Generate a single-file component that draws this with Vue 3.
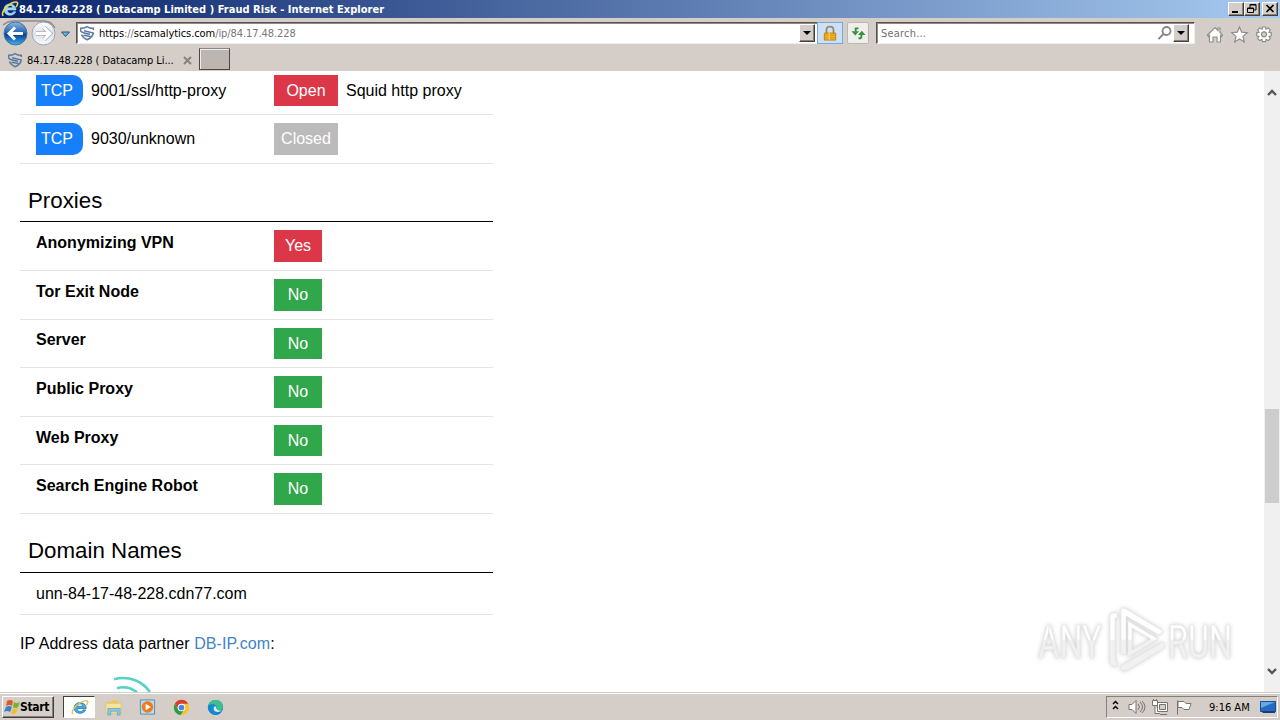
<template>
  <div class="screen">
    <header class="titlebar">
      <svg class="title-ie" viewBox="0 0 18 18">
        <path d="M15 10H6.200c.3 4.200 5.200 4.100 6.200 1.700h2.400C12.600 17 3 16.400 3.100 9.200 3.300 2 14.900 2.300 15 10ZM6.400 7.800h5.400c-.5-3.200-4.800-3.200-5.400 0Z" fill="#8ed4f8" stroke="#d3f1ff" stroke-width=".5" />
        <path d="M2 16C-.5 11 9 2 15 2c3 0 1 4 0 5" fill="none" stroke="#f0d549" stroke-width="1.600" />
      </svg>
      <span class="title-text">84.17.48.228 ( Datacamp Limited ) Fraud Risk - Internet Explorer</span>
      <div class="window-buttons">
        <button class="win-btn"><svg viewBox="0 0 14 12"><path d="M3 9h6" stroke="#000" stroke-width="2" /></svg></button>
        <button class="win-btn"><svg viewBox="0 0 14 12"><path d="M5 5V1.500h6V7H9M5 2h6M2.500 5h6v4.500h-6zM2 5.500h7" fill="none" stroke="#000" /></svg></button>
        <button class="win-btn close"><svg viewBox="0 0 14 12"><path d="m3.500 2 7 7m0-7-7 7" stroke="#000" stroke-width="1.700" /></svg></button>
      </div>
    </header>

    <nav class="toolbar">
      <svg class="nav-arrows" viewBox="0 0 74 28">
        <defs>
          <linearGradient id="back" x2="0" y2="1">
            <stop stop-color="#8bb9e7" /><stop offset=".45" stop-color="#2864b3" /><stop offset=".55" stop-color="#0b3f93" /><stop offset="1" stop-color="#3bb5ee" />
          </linearGradient>
          <linearGradient id="forward" x2="0" y2="1">
            <stop stop-color="#fff" /><stop offset=".5" stop-color="#dce1e8" /><stop offset="1" stop-color="#f6fbff" />
          </linearGradient>
        </defs>
        <path d="M3 6Q8 1.500 16 2H43Q51 1.500 55 9" fill="none" stroke="#918d89" stroke-width="1.500" />
        <circle cx="15.500" cy="14.500" r="11.500" fill="url(#back)" stroke="#526f9a" />
        <path d="M23 14.500H9m6-6-6 6 6 6" fill="none" stroke="#fff" stroke-width="3" />
        <circle cx="43.500" cy="14.500" r="11.500" fill="url(#forward)" stroke="#9ca3aa" />
        <path d="M36 14.500h14m-6-6 6 6-6 6" fill="none" stroke="#aaafb6" stroke-width="4.500" />
        <path d="M36 14.500h14m-6-6 6 6-6 6" fill="none" stroke="#fff" stroke-width="3" />
        <path d="M61.500 13h8l-4 4.500z" fill="#65b2dd" stroke="#24587f" />
      </svg>
      <div class="address">
        <svg class="shield" viewBox="0 0 16 16"><path :d="shield" /></svg>
        <span class="url"><b>https</b>://<b>scamalytics.com</b>/ip/84.17.48.228</span>
        <button class="drop"><i></i></button>
      </div>
      <div class="lock">
        <svg viewBox="0 0 16 18">
          <path d="M4 9V5c0-5 8-5 8 0v4" fill="none" stroke="#9b8860" stroke-width="2" />
          <path d="M1.500 8.500h13v8h-13z" fill="#f4b324" stroke="#b7790b" />
          <path d="M2 11h12M2 14h12" stroke="#d99112" /><path d="M7 8v8" stroke="#ffe27b" />
        </svg>
      </div>
      <div class="refresh">
        <svg viewBox="0 0 18 16">
          <path d="M9 2.500H6V6M12 13V9m0 4H9" fill="none" stroke="#349241" stroke-width="2" />
          <path d="M1.500 5.500h8l-4 4.500zM8.500 9.500h8l-4-4.500z" fill="#349241" />
        </svg>
      </div>
      <div class="search">
        <span>Search...</span>
        <svg viewBox="0 0 14 14"><circle cx="8.500" cy="5" r="4" /><path d="m5.500 8-5 5" /></svg>
        <button class="drop"><i></i></button>
      </div>
      <svg class="tools" viewBox="0 0 68 20">
        <g fill="#fff" stroke="#918d8b" stroke-width="1.200">
          <path d="m1.500 10 7.500-7.500 3 3V3h2v4.500l2.500 2.500-1 1.500-1-1V17H11v-5H7v5H3.500v-6.500l-1 1z" />
          <path d="m33.500 2 2.200 5.200 5.600.5-4.300 3.700 1.300 5.600-4.800-3-4.800 3 1.300-5.600-4.300-3.700 5.600-.5z" />
          <path d="m56.500 2h3l.5 2.200 2.300-1.200 2 2-1.200 2.300 2.200.5v3l-2.200.5 1.200 2.300-2 2-2.300-1.200-.5 2.200h-3l-.5-2.200-2.300 1.200-2-2 1.200-2.300-2.200-.5v-3l2.200-.5-1.200-2.300 2-2L56 4.200z" />
          <circle cx="58" cy="9.300" r="2.500" fill="#d5cec8" />
        </g>
      </svg>
    </nav>

    <div class="tabs">
      <div class="tab">
        <svg class="shield" viewBox="0 0 16 16"><path :d="shield" /></svg>
        <span>84.17.48.228 ( Datacamp Li...</span>
        <svg class="tab-close" viewBox="0 0 9 9"><path d="m1 1 7 7m0-7-7 7" /></svg>
      </div>
      <div class="new-tab"></div>
    </div>

    <main class="viewport">
      <div class="page">
        <div v-for="port in ports" :key="port.name" class="row">
          <div class="cell-name">
            <span class="protocol">TCP</span>
            <span>{{ port.name }}</span>
          </div>
          <span class="badge wide" :class="port.state.toLowerCase()">{{ port.state }}</span>
          <span class="detail">{{ port.detail }}</span>
        </div>

        <h2>Proxies</h2>
        <div v-for="proxy in proxies" :key="proxy.name" class="row">
          <strong class="cell-name">{{ proxy.name }}</strong>
          <span class="badge" :class="proxy.value.toLowerCase()">{{ proxy.value }}</span>
        </div>

        <h2 class="domains">Domain Names</h2>
        <div class="row domain">unn-84-17-48-228.cdn77.com</div>

        <p class="partner">IP Address data partner <a>DB-IP.com</a>:</p>
        <svg class="partner-logo" viewBox="0 0 50 16">
          <path d="M4 3.200C19-.5 32 5 40 16M7 12.200c7-2 14-.5 20 4" fill="none" stroke="#54d2c8" stroke-width="2.600" />
        </svg>
      </div>
      <div class="scrollbar">
        <svg viewBox="0 0 10 7"><path d="m1 6 4-4 4 4" /></svg>
        <div class="thumb"></div>
        <svg class="down" viewBox="0 0 10 7"><path d="m1 1 4 4 4-4" /></svg>
      </div>
      <svg class="watermark" viewBox="0 0 210 76">
        <defs>
          <linearGradient id="mark-fill" gradientUnits="userSpaceOnUse" x1="0" y1="0" x2="0" y2="76">
            <stop offset=".5" stop-color="#fff" /><stop offset=".52" stop-color="#f1f1f1" />
          </linearGradient>
        </defs>
        <g class="mark" fill="url(#mark-fill)">
          <g transform="scale(.69 1)">
            <text x="12" y="57">ANY</text>
            <text x="200" y="57">RUN</text>
          </g>
          <path fill-rule="evenodd" d="M87 12h-3q-4 0-4 4v44q0 4 4 5l3 1v-5l-2-1V17h2zM91 8v45h5V15l33 19 4-4L96 8q-4-2-5 0zM98 20v36l30-18zM102 27v22l19-11zM133 41 91 65l1 5 5-1 35-21q4-3 1-7z" />
        </g>
      </svg>
    </main>

    <footer class="taskbar">
      <button class="start">
        <svg viewBox="0 0 16 16">
          <path d="M3 2q3-2 6 0L8 7Q5 5 2 7z" fill="#e45825" /><path d="M10 3q3 2 6 0l-2 5q-3 2-5 0z" fill="#72b62d" />
          <path d="M2 8q3-2 6 0l-2 5q-3-2-6 0z" fill="#3580d2" /><path d="M9 9q2 2 5 0l-2 5q-3 2-5 0z" fill="#f4bd28" />
        </svg>
        <span>Start</span>
      </button>
      <div class="task active">
        <svg viewBox="0 0 20 20">
          <path d="M17 11H7.500c.2 4 5 4 6.200 1.500h2.800C14 18 4 17 4.300 10.300 4.500 3 17 2.800 17 11ZM7.700 8.700h6c-.5-3.500-5.500-3.500-6 0Z" fill="#46aee5" stroke="#257fb9" stroke-width=".9" />
          <path d="M3 17C0 13 9 4 16 3c4-.5 3 2 1 5" fill="none" stroke="#e9c44a" stroke-width="1.500" />
        </svg>
      </div>
      <div class="task">
        <svg viewBox="0 0 20 20">
          <path d="M3 4h5l1-2h6v14H3z" fill="#e9c969" /><path d="M2 5.500h16V16H2z" fill="#f7e49a" stroke="#d6b95f" stroke-width=".6" />
          <path d="M4 18v-7h13v7h-3v-4H7v4z" fill="#83c8e6" stroke="#5099bb" stroke-width=".6" />
        </svg>
      </div>
      <div class="task">
        <svg viewBox="0 0 20 20">
          <path d="M2.500 2h15v15h-15z" fill="#bad9ed" stroke="#568cb0" /><circle cx="10" cy="9.500" r="6" fill="#ef791c" /><path d="m8 6 5.500 3.500L8 13z" fill="#fff" />
        </svg>
      </div>
      <div class="task">
        <svg viewBox="0 0 20 20">
          <circle cx="10" cy="10" r="8" fill="#f5c528" /><path d="M3 6a8 8 0 0 1 14 0h-7a4 4 0 0 0-3.500 6z" fill="#db3c30" />
          <path d="M3 6a8 8 0 0 0 6 12l3.500-5.500a4 4 0 0 1-6-.5z" fill="#2c9c4c" /><circle cx="10" cy="10" r="4" fill="#fff" /><circle cx="10" cy="10" r="3" fill="#4285f4" />
        </svg>
      </div>
      <div class="task">
        <svg viewBox="0 0 20 20">
          <circle cx="10" cy="10" r="8" fill="#1475bd" /><path d="M2 9C3-.5 18 0 18 9c0 4-4 5-7 3 1-2 1-5-3-5-3 0-5 1-6 2z" fill="#3dbf91" />
          <path d="M2 9c2-4 9-3 9 1-3 0-3 6 5 5-5 5-14 2-14-6z" fill="#1388d4" /><path d="M11 9c-1 3 2 5 6 4-3 3-9 2-9-2 0-2 2-3 3-2z" fill="#d4eff7" />
        </svg>
      </div>
      <div class="tray">
        <svg class="tray-icons" viewBox="0 0 86 18">
          <path d="m2 6 2.500-2.500L7 6M2 11l2.500-2.500L7 11" fill="none" stroke="#000" stroke-width="1.500" />
          <g fill="#fff" stroke="#77736f">
            <path d="M18 6.500h3l4-4v13l-4-4h-3z" /><path d="M27 6q3 3 0 6m2-8q5 5 0 10m2-11q6 6 0 12" fill="none" />
            <path d="M46.500 4.500h10v9h-10zM49 16.500h7M41.500 2.500h5v5h-5zM42.500 1v2m3-2v2M44 7.500v8h5" /><path d="M48.500 6.500h6v5h-6z" fill="#d4d0c8" />
            <path d="M66.500 2.500v14M67 3.500h6l2 2h5l-2 6h-5l-2-2h-4z" />
          </g>
        </svg>
        <time>9:16 AM</time>
        <svg class="desktop" viewBox="0 0 16 14"><path d="M.5 1.500h15v10H.5z" fill="#266bc2" stroke="#184e94" /><path d="M1 2h14L1 8z" fill="#65a9e8" /><path d="M1 11h14v2H3z" fill="#183f78" /></svg>
      </div>
    </footer>
  </div>
</template>

<script setup>
// shared by the address bar and the tab
const shield = 'M14.300 5V3.300Q11 3.500 8 1.600 5 3.500 1.700 3.300V6Q2 7.500 11 9.300M5 5.800 14.300 8Q13.500 12.500 8 14.700 4 13 2.300 9.700M4.500 10.300 11.500 11.500'

const ports = [
  { name: '9001/ssl/http-proxy', state: 'Open', detail: 'Squid http proxy' },
  { name: '9030/unknown', state: 'Closed', detail: '' },
]

const proxies = [
  { name: 'Anonymizing VPN', value: 'Yes' },
  { name: 'Tor Exit Node', value: 'No' },
  { name: 'Server', value: 'No' },
  { name: 'Public Proxy', value: 'No' },
  { name: 'Web Proxy', value: 'No' },
  { name: 'Search Engine Robot', value: 'No' },
]
</script>

<style>
body {
  overflow: hidden;
}
</style>

<style scoped>
* {
  box-sizing: border-box;
}
.screen {
  display: flex;
  flex-direction: column;
  width: 1280px;
  height: 720px;
  overflow: hidden;
  background: #d5cec8;
  font: 11px "DejaVu Sans Condensed", "DejaVu Sans", sans-serif;
  color: #000;
}
svg {
  display: block;
  flex: none;
}
button {
  padding: 0;
  border: 1px solid;
  border-color: #fff #404040 #404040 #fff;
  background: #d5cec8;
  box-shadow: inset -1px -1px #858078;
  font: inherit;
}
.titlebar {
  display: flex;
  align-items: center;
  flex: none;
  height: 18px;
  padding: 0 2px 0 1px;
  background: linear-gradient(90deg, #0a246a, #a6caf0);
}
.title-ie {
  width: 18px;
  height: 18px;
}
.title-text {
  color: #fff;
  font-weight: bold;
  white-space: nowrap;
  letter-spacing: 0.03px;
}
.window-buttons {
  display: flex;
  margin-left: auto;
}
.win-btn {
  width: 16px;
  height: 14px;
}
.win-btn svg {
  width: 14px;
  height: 12px;
}
.win-btn.close {
  margin-left: 2px;
}
.toolbar {
  display: flex;
  flex: none;
  height: 30px;
  padding-top: 1px;
}
.nav-arrows {
  width: 74px;
  height: 28px;
}
.address,
.search {
  display: flex;
  align-items: center;
  height: 22px;
  margin-top: 3px;
  border: 1px solid;
  border-color: #57514d #eee #eee #57514d;
  box-shadow: inset 1px 1px #918a85;
  background: #fff;
}
.address {
  width: 742px;
  margin-left: 2px;
  padding: 1px 2px;
}
.shield {
  width: 16px;
  height: 16px;
  fill: none;
  stroke: #5b7ba2;
  stroke-width: 1.5;
}
.url {
  margin-left: 4px;
  color: #777;
  letter-spacing: -0.08px;
}
.url b {
  font-weight: normal;
  color: #000;
}
.drop {
  width: 16px;
  height: 18px;
  margin-left: auto;
}
.drop i {
  display: block;
  width: 0;
  margin: auto;
  border: 4px solid transparent;
  border-top-color: #000;
  border-bottom: 0;
}
.lock,
.refresh {
  display: flex;
  align-items: center;
  justify-content: center;
  height: 22px;
  margin-top: 3px;
}
.lock {
  width: 26px;
  margin-left: -1px;
  border: 1px solid #78a8dc;
  background: #cce1f8;
}
.lock svg {
  width: 14px;
  height: 17px;
}
.refresh {
  width: 22px;
  margin-left: 4px;
  border: 1px solid #bbb8b4;
  border-radius: 2px;
  background: #f0eeeb;
}
.refresh svg {
  width: 17px;
  height: 15px;
}
.search {
  width: 319px;
  margin-left: 7px;
  padding: 0 5px 0 4px;
  color: #707070;
}
.search span {
  letter-spacing: 0.2px;
}
.search svg {
  width: 14px;
  height: 14px;
  margin-left: auto;
  fill: none;
  stroke: #858585;
  stroke-width: 1.8;
}
.search .drop {
  margin-left: 1px;
}
.tools {
  width: 68px;
  height: 20px;
  margin: 6px 0 0 11px;
}
.tabs {
  display: flex;
  flex: none;
  height: 23px;
}
.tab {
  display: flex;
  align-items: center;
  width: 199px;
  padding-left: 7px;
}
.tab span {
  margin-left: 4px;
  padding-top: 1px;
  white-space: nowrap;
  letter-spacing: -0.05px;
}
.tab-close {
  width: 9px;
  height: 9px;
  margin: 1px 7px 0 auto;
  stroke: #85807c;
  stroke-width: 2;
}
.new-tab {
  width: 31px;
  height: 22px;
  border: 1px solid #4b4745;
  border-top-color: #888;
  background: #bdb5b0;
  box-shadow: inset 1px 1px #eee;
}
.viewport {
  display: flex;
  position: relative;
  flex: none;
  height: 621px;
  overflow: hidden;
  background: #fff;
}
.page {
  width: 1264px;
  height: 621px;
  padding-left: 20px;
  overflow: hidden;
  font: 16px/24px "Liberation Sans", Arial, sans-serif;
}
.row {
  display: flex;
  align-items: flex-start;
  width: 473px;
  height: 48.6px;
  padding: 8px 0 0 16px;
  border-bottom: 1px solid #e4e4e4;
}
.row:first-child {
  margin-top: -4.4px;
}
.cell-name {
  display: flex;
  width: 238px;
}
strong.cell-name {
  padding-top: 0.9px;
}
div.cell-name {
  line-height: 31px;
}
.protocol {
  width: 47px;
  height: 31.6px;
  margin-right: 8px;
  padding-left: 5px;
  border-radius: 0 10px 10px 0;
  background: #167ffc;
  color: #fff;
}
.badge {
  width: 48px;
  height: 31.6px;
  background: #2fa74a;
  color: #fff;
  line-height: 31px;
  text-align: center;
}
.badge.wide {
  width: 64px;
}
.badge.open,
.badge.yes {
  background: #dc3749;
}
.badge.closed {
  background: #bbb;
}
.detail {
  margin-left: 8px;
  line-height: 31px;
}
h2 {
  width: 473px;
  height: 58.62px;
  margin: 0;
  padding: 23px 0 0 8px;
  border-bottom: 1px solid #000;
  font-size: 22.3px;
  font-weight: normal;
  line-height: 28px;
}
h2.domains {
  height: 58.88px;
}
.row.domain {
  height: 42px;
  padding-top: 9px;
}
.partner {
  margin: 17px 0 0;
  letter-spacing: 0.08px;
}
.partner a {
  color: #4184c7;
}
.partner-logo {
  width: 50px;
  height: 16px;
  margin: 20px 0 0 90px;
}
.scrollbar {
  display: flex;
  flex-direction: column;
  align-items: center;
  width: 16px;
  padding: 18px 0 17px;
  background: #f0f0f0;
}
.scrollbar svg {
  width: 10px;
  height: 7px;
  fill: none;
  stroke: #555;
  stroke-width: 2.4;
}
.thumb {
  width: 14px;
  height: 94px;
  margin-top: 313px;
  background: #cdcdcd;
}
.scrollbar .down {
  margin-top: auto;
}
/* overlays the page's bottom right corner */
.watermark {
  position: absolute;
  right: 40px;
  bottom: 15px;
  width: 210px;
  height: 76px;
}
.mark {
  stroke: #e8e8e8;
  stroke-width: 0.7;
  filter: drop-shadow(0 0 2px #c8c8c8);
}
.mark text {
  font: 47px Roboto, sans-serif;
}
.taskbar {
  display: flex;
  align-items: center;
  flex: none;
  height: 28px;
  padding: 1px 2px 0;
  border-top: 1px solid #d5cec8;
  box-shadow: inset 0 1px #fff;
}
.start {
  display: flex;
  align-items: center;
  width: 52px;
  height: 22px;
  padding-left: 1px;
  font-weight: bold;
}
.start svg {
  width: 16px;
  height: 16px;
}
.start span {
  font-size: 12px;
  letter-spacing: -0.3px;
}
.task {
  display: flex;
  align-items: center;
  justify-content: center;
  width: 34px;
  height: 22px;
}
.task svg {
  width: 19px;
  height: 19px;
}
.task.active {
  width: 32px;
  margin: 0 1px 0 9px;
  border: 1px solid;
  border-color: #404040 #fff #fff #404040;
  background: #fff;
}
.tray {
  display: flex;
  align-items: center;
  width: 172px;
  height: 22px;
  margin-left: auto;
  padding-left: 4px;
  border: 1px solid;
  border-color: #858078 #fff #fff #858078;
}
.tray-icons {
  width: 86px;
  height: 18px;
}
.tray time {
  margin-left: 12px;
  white-space: nowrap;
}
.desktop {
  width: 16px;
  height: 14px;
  margin: 0 1px 0 auto;
}
</style>
